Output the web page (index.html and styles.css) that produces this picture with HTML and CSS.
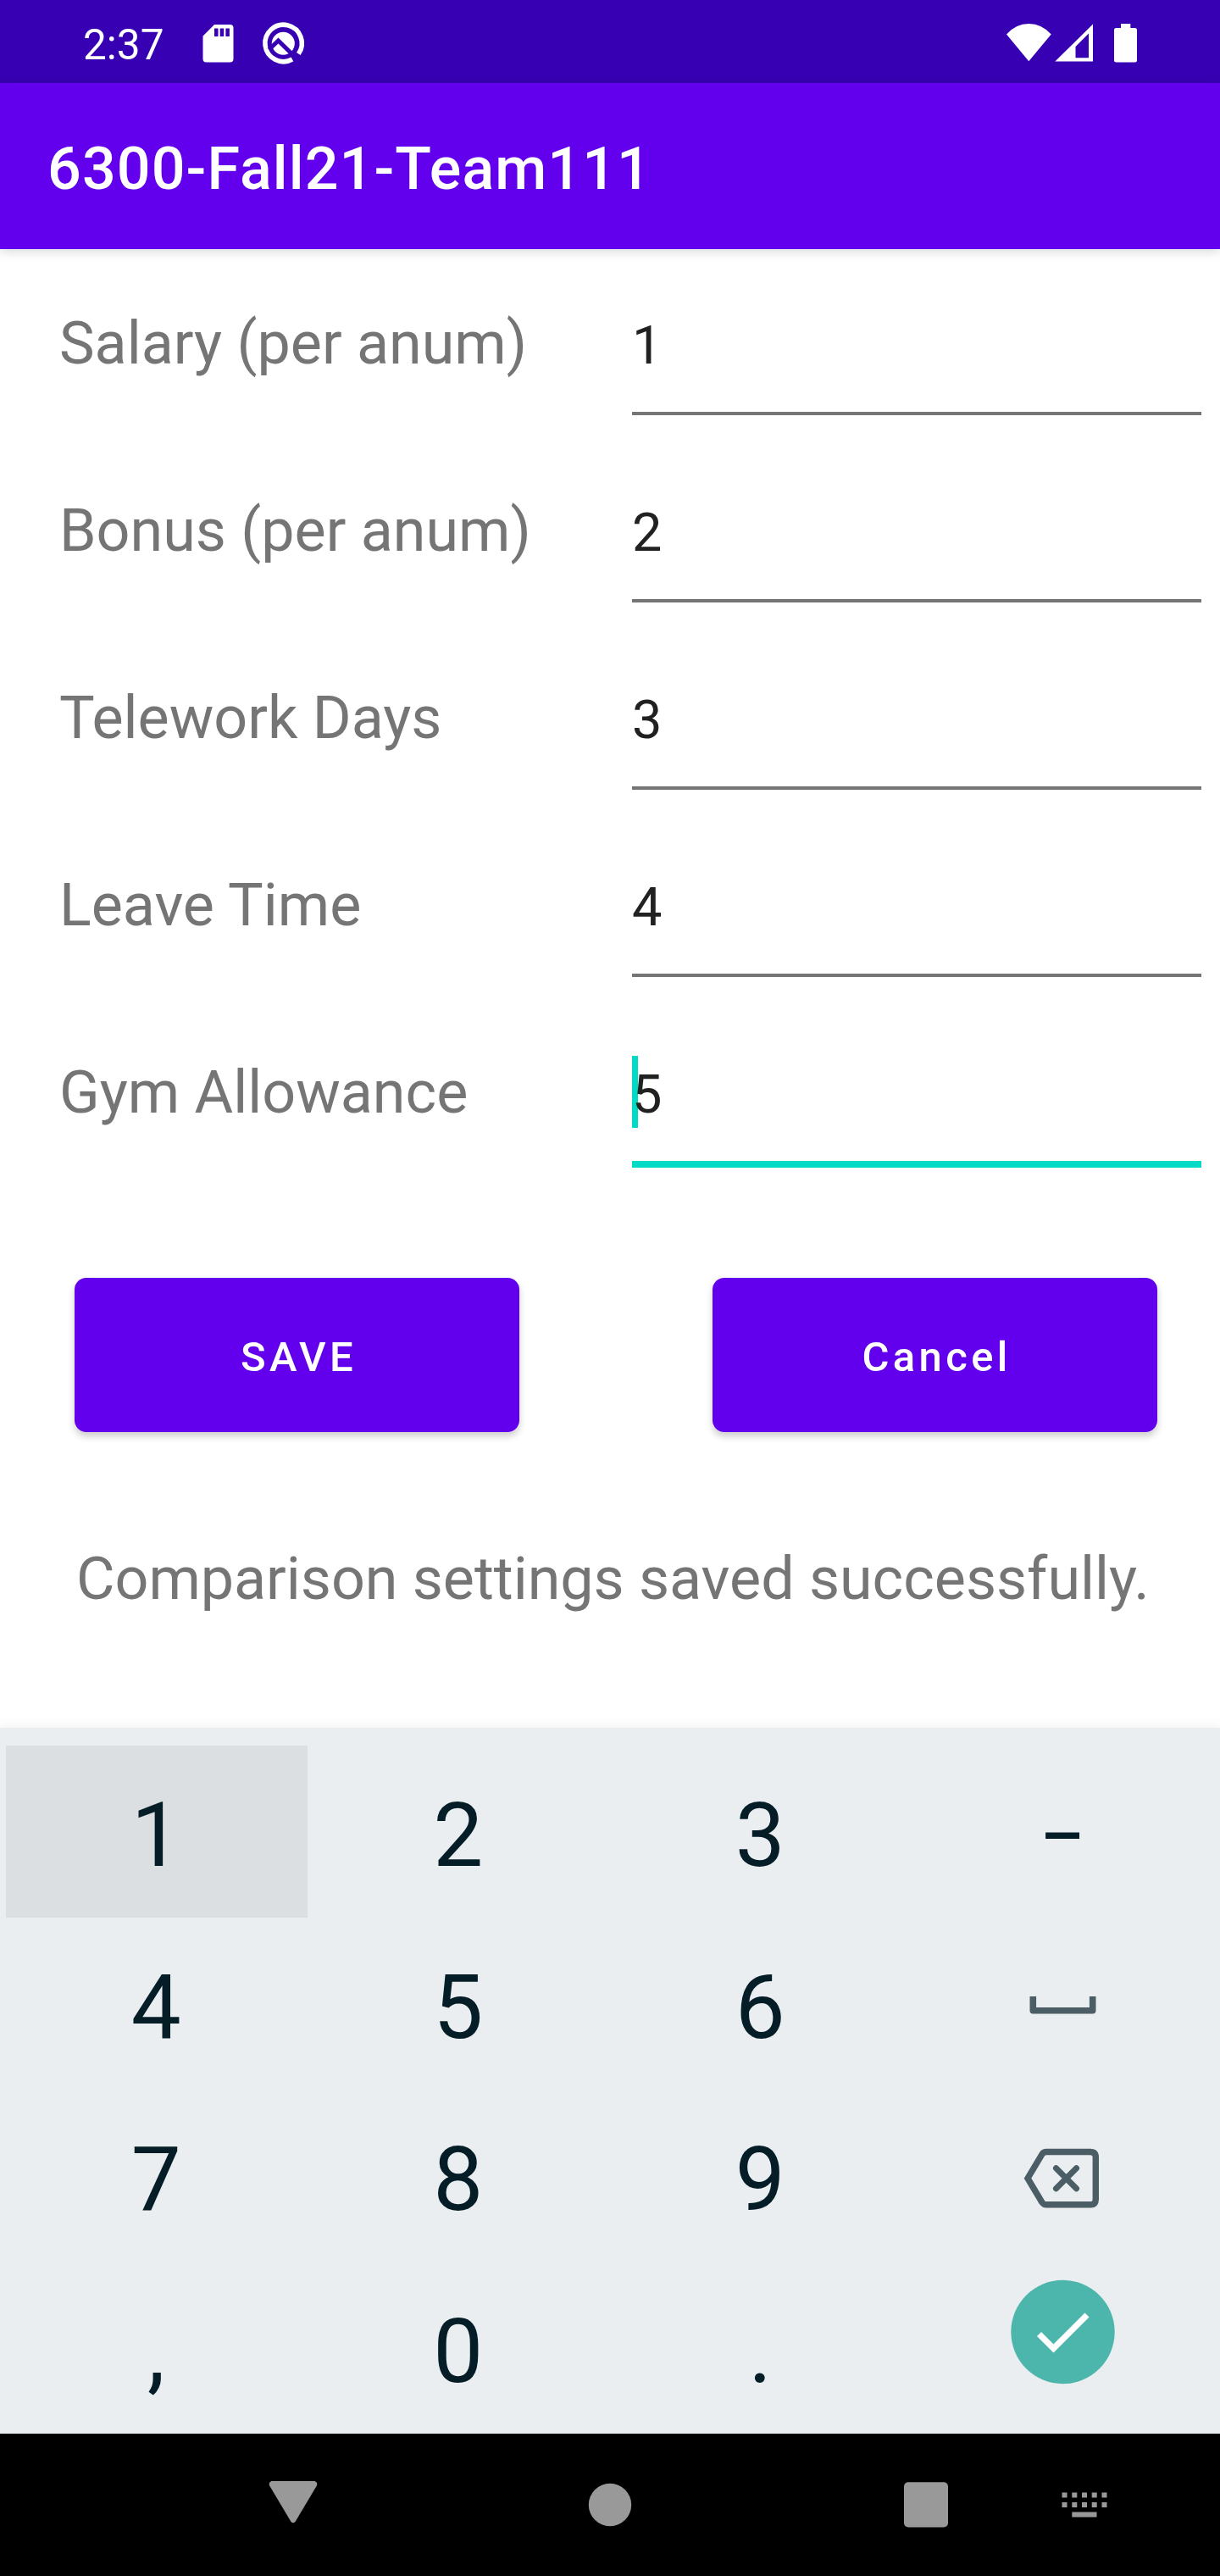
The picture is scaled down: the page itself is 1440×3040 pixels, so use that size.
FILE: index.html
```html
<!DOCTYPE html>
<html lang="en">
<head>
<meta charset="utf-8">
<title>6300-Fall21-Team111</title>
<link rel="stylesheet" href="styles.css">
</head>
<body>
<div class="status">
  <span class="clock">2:37</span>
  <svg class="status-left" width="120" height="98" viewBox="230 0 120 98">
    <path fill="#fff" fill-rule="evenodd" d="M253 29h18.500a4 4 0 0 1 4 4v36.500a4 4 0 0 1-4 4h-28a4 4 0 0 1-4-4V42.500zM253 33.500v9.500h4.500v-9.500zM259.700 33.500v9.500h4.500v-9.500zM266.400 33.500v9.500h4.500v-9.500z"/>
    <path fill="none" stroke="#fff" stroke-width="5.600" d="M345 70A21.700 21.700 0 1 1 352.300 63.500"/>
    <circle cx="334.300" cy="51.300" r="13.500" fill="#fff"/>
    <path fill="none" stroke="#3700b3" stroke-width="5" d="M317.500 58.500L328.500 48l22 21.500"/>
  </svg>
  <svg class="status-right" width="160" height="98" viewBox="1186 0 160 98">
    <path fill="#fff" d="M1188 40.500Q1199 28 1214.300 28T1240.700 40.500L1214.300 72.300z"/>
    <path fill="#fff" fill-rule="evenodd" d="M1245.300 72.600L1290 28.500V72.600zM1269.500 55V68.300H1285V39.500z"/>
    <path fill="#fff" d="M1323 28h11.300v5h5.200a2.500 2.500 0 0 1 2.500 2.500V71a2.500 2.500 0 0 1-2.500 2.500h-22A2.500 2.500 0 0 1 1315 71V35.500a2.500 2.500 0 0 1 2.500-2.500h5.500z"/>
  </svg>
</div>
<header class="appbar"><h1 class="title">6300-Fall21-Team111</h1></header>
<main class="content">
  <div class="row"><label class="label">Salary (per anum)</label><div class="field">1</div></div>
  <div class="row"><label class="label">Bonus (per anum)</label><div class="field">2</div></div>
  <div class="row"><label class="label">Telework Days</label><div class="field">3</div></div>
  <div class="row"><label class="label">Leave Time</label><div class="field">4</div></div>
  <div class="row"><label class="label">Gym Allowance</label><div class="field focused">5</div></div>
  <div class="actions"><button class="btn">SAVE</button><button class="btn">Cancel</button></div>
  <p class="message">Comparison settings saved successfully.</p>
</main>
<section class="keyboard">
  <div class="key pressed">1</div><div class="key">2</div><div class="key">3</div><div class="key dash">–</div>
  <div class="key">4</div><div class="key">5</div><div class="key">6</div>
  <div class="key"><svg class="glyph" width="140" height="203" viewBox="1184 2263 140 203"><path fill="none" stroke="#4b5d65" stroke-width="7.600" stroke-linejoin="round" d="M1219.300 2356v16.800h70.400V2356"/></svg></div>
  <div class="key">7</div><div class="key">8</div><div class="key">9</div>
  <div class="key"><svg class="glyph" width="140" height="203" viewBox="1184 2466 140 203"><path fill="none" stroke="#4b5d65" stroke-width="7.400" d="M1235 2539.500h52q6.300 0 6.300 6.300v49.700q0 6.300-6.300 6.300h-52q-3 0-5-2.700L1213 2570.700l17-28.500q2-2.700 5-2.700z"/><path stroke="#4b5d65" stroke-width="7" stroke-linecap="round" d="M1246.500 2558.700l24 24m0-24l-24 24"/></svg></div>
  <div class="key">,</div><div class="key">0</div><div class="key">.</div>
  <div class="key"><svg class="glyph" width="140" height="203" viewBox="1184 2669 140 203"><circle cx="1254.500" cy="2752" r="61.200" fill="#4db6ac"/><path fill="none" stroke="#fff" stroke-width="7.200" d="M1226.500 2754.500l17 17 39.500-39.500"/></svg></div>
</section>
<nav class="navbar">
  <svg width="1440" height="168" viewBox="0 2872 1440 168" fill="#999">
    <path d="M320.500 2928h51q4 1.500 2.300 5.500L348.500 2976q-2.500 2.500-5 0L318.200 2933.500q-1.700-4 2.300-5.500z"/>
    <circle cx="720" cy="2956" r="25.200"/>
    <rect x="1067" y="2929.300" width="52" height="53.200" rx="5"/>
    <path d="M1253.500 2941.500h6v6h-6zM1265.300 2941.500h6v6h-6zM1277 2941.500h6v6h-6zM1288.700 2941.500h6v6h-6zM1300.500 2941.500h6v6h-6zM1253.500 2953h6v6h-6zM1265.300 2953h6v6h-6zM1277 2953h6v6h-6zM1288.700 2953h6v6h-6zM1300.500 2953h6v6h-6zM1265.300 2964.600h29.200v6h-29.200z"/>
  </svg>
</nav>
</body>
</html>
```
FILE: styles.css
```css
* { box-sizing: border-box; }
body { margin: 0; width: 1440px; height: 3040px; display: flex; flex-direction: column; background: #fff; font-family: Roboto, "Liberation Sans", sans-serif; overflow: hidden; }
svg { display: block; }
.status { height: 98px; flex: none; display: flex; padding-left: 98px; padding-right: 94px; background: #3700b3; color: #fff; }
.clock { width: 132px; font-size: 49.500px; line-height: 58px; padding-top: 24px; }
.status-left { flex: none; overflow: visible; }
.status-right { margin-left: auto; }
.appbar { height: 196px; flex: none; display: flex; align-items: center; padding-left: 56px; background: #6200ee; color: #fff; box-shadow: 0 3px 12px rgba(0, 0, 0, .15); }
.title { margin: 0; font-size: 70px; font-weight: 500; line-height: 82px; letter-spacing: 1.100px; padding-top: 5px; }
.content { height: 1745px; flex: none; padding-top: 14px; }
.row { height: 221px; display: flex; padding-left: 70px; }
.label { width: 676px; font-size: 70px; line-height: 82px; padding-top: 56px; color: #757575; }
.field { position: relative; width: 672px; height: 182px; padding-top: 63px; border-bottom: 4px solid #757575; font-size: 63px; line-height: 74px; color: #212121; }
.focused { height: 186px; border-bottom: 8px solid #03dac5; }
.focused::before { content: ""; position: absolute; z-index: -1; left: 0; top: 54px; width: 7px; height: 85px; background: #03dac5; }
.actions { display: flex; gap: 228px; padding: 95px 0 0 88px; }
.btn { width: 525px; height: 182px; border: 0; border-radius: 14px; padding: 5px 0 0 4px; background: #6200ee; color: #fff; font: 500 49px/58px Roboto, "Liberation Sans", sans-serif; letter-spacing: 4.375px; box-shadow: 0 5px 8px rgba(0, 0, 0, .2); }
.message { margin: 132px 0 0 90px; font-size: 70px; line-height: 82px; letter-spacing: -.03px; color: #757575; white-space: nowrap; }
.keyboard { height: 833px; flex: none; display: grid; grid-template-columns: repeat(4, 356.500px); grid-template-rows: repeat(4, 203px); padding: 21px 7px 0 6.500px; background: #eaeef1; color: #051d27; font-size: 105px; line-height: 124px; text-align: center; box-shadow: 0 0 14px rgba(0, 0, 0, .08); }
.key { padding: 45px 1px 0 0; }
.key .glyph { margin: -45px auto 0; }
.key.dash { font-size: 80px; font-weight: 500; }
.pressed { background: #dbdfe2; }
.navbar { height: 168px; flex: none; background: #000; }
```
